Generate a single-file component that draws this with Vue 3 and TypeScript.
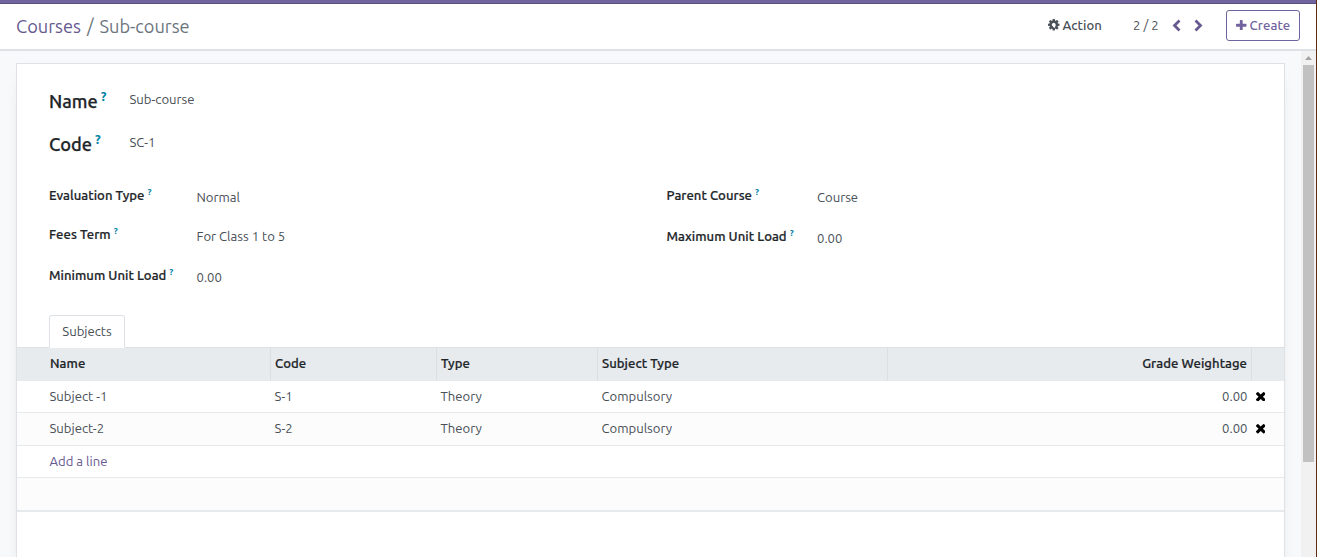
<script setup lang="ts">
interface Field {
  label: string
  value: string
  cls: string
}
interface Subject {
  name: string
  code: string
  type: string
  subjectType: string
  weight: string
}

const titles: Field[] = [
  { label: 'Name', value: 'Sub-course', cls: 't-name' },
  { label: 'Code', value: 'SC-1', cls: 't-code' },
]
const left: Field[] = [
  { label: 'Evaluation Type', value: 'Normal', cls: 'h40' },
  { label: 'Fees Term', value: 'For Class 1 to 5', cls: 'h38' },
  { label: 'Minimum Unit Load', value: '0.00', cls: 'h44' },
]
const right: Field[] = [
  { label: 'Parent Course', value: 'Course', cls: 'h40' },
  { label: 'Maximum Unit Load', value: '0.00', cls: 'h42' },
]
const subjects: Subject[] = [
  { name: 'Subject -1', code: 'S-1', type: 'Theory', subjectType: 'Compulsory', weight: '0.00' },
  { name: 'Subject-2', code: 'S-2', type: 'Theory', subjectType: 'Compulsory', weight: '0.00' },
]
</script>

<template>
  <div class="app">
    <div class="navline"></div>
    <header class="panel">
      <div class="crumbs">
        <a class="crumb-link">Courses</a><span class="slash">/</span><span class="crumb-now">Sub-course</span>
      </div>
      <div class="action">
        <svg class="cog" viewBox="0 128 1536 1536"><path fill="currentColor" d="M1024 896q0-106-75-181t-181-75-181 75-75 181 75 181 181 181 181-75 75-181zm512-109v222q0 12-8 23t-20 13l-185 28q-19 54-39 91 35 50 107 138 10 12 10 25t-9 23q-27 37-99 108t-94 71q-12 0-26-9l-138-108q-44 23-91 38-16 136-29 186-7 28-36 28h-222q-14 0-24.500-8.500t-11.500-21.500l-28-184q-49-16-90-37l-141 107q-10 9-25 9-14 0-25-11-126-114-165-168-7-10-7-23 0-12 8-23 15-21 51-66.500t54-70.500q-27-50-41-99l-183-27q-13-2-21-12.500t-8-23.500v-222q0-12 8-23t19-13l186-28q14-46 39-92-40-57-107-138-10-12-10-24 0-10 9-23 26-36 98.500-107.500t94.500-71.500q13 0 26 10l138 107q44-23 91-38 16-136 29-186 7-28 36-28h222q14 0 24.500 8.500t11.500 21.500l28 184q49 16 90 37l142-107q9-9 24-9 13 0 25 10 129 119 165 170 7 8 7 22 0 12-8 23-15 21-51 66.500t-54 70.500q26 50 41 98l183 28q13 2 21 12.500t8 23.500z" /></svg>
        <span>Action</span>
      </div>
      <div class="pager">2 / 2</div>
      <svg class="chev prev" viewBox="0 0 9 13"><path d="M7.500 1.500L2.500 6.500L7.500 11.500" /></svg>
      <svg class="chev next" viewBox="0 0 9 13"><path d="M1.500 1.500L6.500 6.500L1.500 11.500" /></svg>
      <button class="create">
        <svg class="plus" viewBox="0 128 1408 1408"><path fill="currentColor" d="M1408 736v192q0 40-28 68t-68 28h-416v416q0 40-28 68t-68 28h-192q-40 0-68-28t-28-68v-416h-416q-40 0-68-28t-28-68v-192q0-40 28-68t68-28h416v-416q0-40 28-68t68-28h192q40 0 68 28t28 68v416h416q40 0 68 28t28 68z" /></svg>
        <span>Create</span>
      </button>
    </header>

    <div class="body">
      <main class="content">
        <section class="sheet">
          <div class="titles">
            <div v-for="f in titles" :key="f.label" class="title-row">
              <div class="title-label" :class="f.cls">{{ f.label }}<sup>?</sup></div>
              <div class="title-value">{{ f.value }}</div>
            </div>
          </div>
          <div class="groups">
            <div class="group g-left">
              <div v-for="f in left" :key="f.label" class="field" :class="f.cls">
                <div class="label">{{ f.label }}<sup>?</sup></div>
                <div class="value">{{ f.value }}</div>
              </div>
            </div>
            <div class="group g-right">
              <div v-for="f in right" :key="f.label" class="field" :class="f.cls">
                <div class="label">{{ f.label }}<sup>?</sup></div>
                <div class="value">{{ f.value }}</div>
              </div>
            </div>
          </div>
          <div class="tabs"><div class="tab">Subjects</div></div>
          <div class="table">
            <div class="row head">
              <div>Name</div><div>Code</div><div>Type</div><div>Subject Type</div>
              <div class="num">Grade Weightage</div><div></div>
            </div>
            <div v-for="s in subjects" :key="s.name" class="row">
              <div>{{ s.name }}</div><div>{{ s.code }}</div><div>{{ s.type }}</div><div>{{ s.subjectType }}</div>
              <div class="num">{{ s.weight }}</div>
              <div class="del">
                <svg viewBox="110 366 1188 1188"><path d="M1298 1322q0 40-28 68l-136 136q-28 28-68 28t-68-28l-294-294-294 294q-28 28-68 28t-68-28l-136-136q-28-28-28-68t28-68l294-294-294-294q-28-28-28-68t28-68l136-136q28-28 68-28t68 28l294 294 294-294q28-28 68-28t68 28l136 136q28 28 28 68t-28 68l-294 294 294 294q28 28 28 68z" /></svg>
              </div>
            </div>
            <div class="row"><div class="add">Add a line</div></div>
            <div class="row last"></div>
          </div>
        </section>
      </main>
      <div class="scroll">
        <svg class="up" viewBox="0 0 7 4"><path d="M0 4L3.500 0L7 4z" /></svg>
        <div class="thumb"></div>
      </div>
    </div>
  </div>
</template>

<style>
body {
  overflow: hidden;
}
</style>

<style scoped>
* {
  box-sizing: border-box;
}
.app {
  width: 1317px;
  height: 557px;
  display: flex;
  flex-direction: column;
  border-right: 1px solid #5f2c0d;
  font: 13.125px/20px Ubuntu, "Noto Sans", sans-serif;
  color: #495057;
  background: #fff;
  overflow: hidden;
  white-space: nowrap;
}
.navline {
  height: 4px;
  flex: none;
  background: #71639e;
  border-bottom: 1px solid #5a4f7f;
}
.panel {
  height: 47px;
  flex: none;
  display: flex;
  align-items: center;
  padding: 0 16px 3px;
  border-bottom: 2px solid #dee2e6;
}
.crumbs {
  flex: 1;
  display: flex;
  font-size: 18.200px;
  line-height: 24px;
  color: #6c757d;
  padding-top: 2px;
}
.crumb-link {
  color: #66598f;
  width: 65px;
}
.slash {
  width: 18.500px;
  padding-left: 6px;
}
.action {
  display: flex;
  align-items: center;
  gap: 3px;
  width: 85px;
  font-weight: 500;
  letter-spacing: 0.050px;
}
.cog {
  width: 11.500px;
  height: 11.500px;
}
.pager {
  width: 39px;
}
.chev {
  width: 9px;
  height: 13px;
  fill: none;
  stroke: #66598f;
  stroke-width: 2.800;
}
.next {
  margin: 0 23px 0 13px;
}
.create {
  width: 74px;
  height: 31px;
  display: flex;
  align-items: center;
  gap: 3px;
  padding: 0 0 0 9px;
  border: 1px solid #71639e;
  border-radius: 3px;
  background: #fff;
  color: #71639e;
  font: inherit;
  font-weight: 500;
  letter-spacing: 0.100px;
}
.plus {
  width: 10.500px;
  height: 10.500px;
}
.body {
  flex: 1;
  display: flex;
  min-height: 0;
  background: #f8f9fa;
}
.content {
  flex: 1;
  padding: 12px 16px 0;
  overflow: hidden;
}
.sheet {
  height: 600px;
  background: #fff;
  border: 1px solid #dee2e6;
  box-shadow: 0 5px 20px -15px rgba(0, 0, 0, 0.4);
}
.titles {
  padding: 16px 0 0 32px;
  height: 111px;
}
.title-row {
  height: 43px;
  display: flex;
}
.title-label {
  width: 80.500px;
  color: #212529;
  font-size: 18.200px;
  font-weight: 500;
  line-height: 43px;
  -webkit-text-stroke: 0.250px currentColor;
}
.title-value {
  line-height: 38px;
}
sup {
  color: #0180a5;
  line-height: 0;
  vertical-align: 5px;
  font-weight: 700;
  font-size: 9.200px;
  margin-left: 3px;
  -webkit-text-stroke: 0;
}
.title-label sup {
  font-size: 13px;
  vertical-align: 7px;
}
.groups {
  display: flex;
  height: 140px;
  padding-left: 32px;
}
.g-left {
  width: 617.500px;
}
.field {
  display: flex;
  align-items: center;
}
.h40 { height: 40px; }
.h38 { height: 38px; }
.h42 { height: 42px; }
.h44 { height: 44px; }
.label {
  width: 147.500px;
  color: #212529;
  font-weight: 500;
  letter-spacing: 0.030px;
  -webkit-text-stroke: 0.200px currentColor;
}
.g-right .label {
  width: 150.500px;
}
.value {
  padding-top: 4px;
}
.tabs {
  display: flex;
  padding-left: 32px;
  height: 33px;
  border-bottom: 1px solid #dee2e6;
}
.tab {
  width: 76px;
  height: 33px;
  border: 1px solid #dee2e6;
  border-bottom-color: #fff;
  border-radius: 3px 3px 0 0;
  text-align: center;
  line-height: 30px;
}
.row {
  display: grid;
  grid-template-columns: 254px 166px 161px 290px 364px 1fr;
  height: 32px;
  line-height: 31px;
  border-bottom: 1px solid #e7eaed;
}
.row:nth-child(odd) {
  background: #fcfcfc;
  height: 33px;
}
.row > div {
  padding-left: 3.500px;
}
.row > div:first-child {
  padding-left: 32.500px;
}
.row.head {
  height: 33px;
  background: #e7ebee;
  color: #212529;
  font-weight: 500;
  letter-spacing: 0.050px;
  border-bottom: 0;
  -webkit-text-stroke: 0.200px currentColor;
}
.row.head > div {
  border-right: 1px solid #dadfe4;
  padding-left: 4px;
}
.row.head > div:first-child {
  padding-left: 33px;
}
.row.head > div:last-child {
  border-right: 0;
}
.row .num {
  text-align: right;
  padding-right: 4.500px;
}
.row.head .num {
  padding-right: 4px;
}
.row > .del {
  display: flex;
  align-items: center;
  padding-left: 3.500px;
}
.del svg {
  width: 9.500px;
  height: 9.500px;
  fill: #000;
}
.row .add {
  color: #66598f;
}
.row.last {
  height: 34px;
  border-bottom-width: 2px;
}
.scroll {
  width: 15px;
  background: #f1f1f1;
  display: flex;
  flex-direction: column;
  align-items: center;
}
.up {
  width: 7px;
  height: 4px;
  margin: 5px 0;
  fill: #a3a3a3;
}
.thumb {
  width: 11px;
  height: 397px;
  background: #c1c1c1;
}
</style>
